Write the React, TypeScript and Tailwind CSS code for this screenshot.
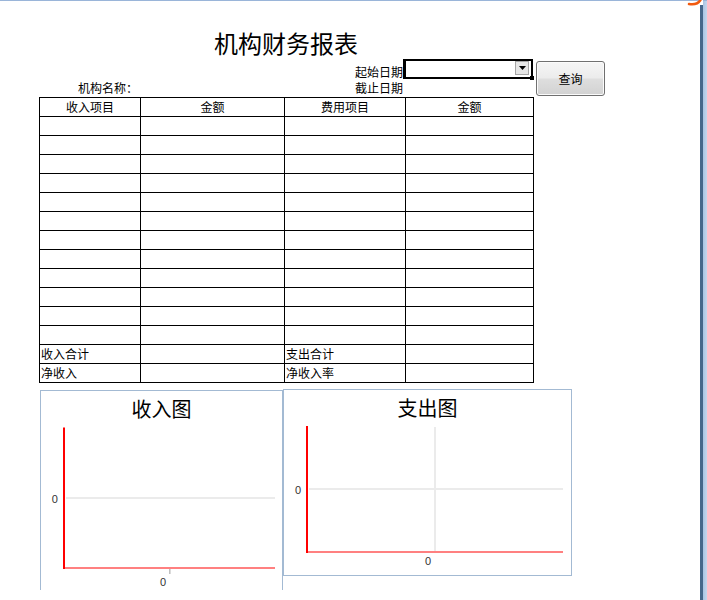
import React from 'react';

const cjk = { fontFamily: '"Noto Sans CJK SC", "Noto Sans", sans-serif' };

const headers = ['收入项目', '金额', '费用项目', '金额'];
const emptyRows = Array.from({ length: 12 });

const ReportTable: React.FC = () => (
  <div className="grid w-fit grid-cols-[100px_143px_120px_127px] auto-rows-[18px] gap-px bg-black p-px text-[12px] leading-[18px] text-black">
    {headers.map((h, i) => (
      <div key={`h${i}`} className="bg-white text-center">
        {h}
      </div>
    ))}
    {emptyRows.map((_, r) =>
      [0, 1, 2, 3].map((c) => <div key={`r${r}c${c}`} className="bg-white" />)
    )}
    <div className="bg-white pl-px">收入合计</div>
    <div className="bg-white" />
    <div className="bg-white pl-px">支出合计</div>
    <div className="bg-white" />
    <div className="bg-white pl-px">净收入</div>
    <div className="bg-white" />
    <div className="bg-white pl-px">净收入率</div>
    <div className="bg-white" />
  </div>
);

const IncomeChart: React.FC = () => (
  <div className="ml-px mt-px h-[200px] w-[243px] border-l border-r border-t border-[#a3bad3] bg-white">
    <div className="h-[30px] pt-[6px] text-center text-[20px] leading-[24px] text-black">收入图</div>
    <svg width="241" height="169" className="block">
      <line x1="25" y1="77" x2="234" y2="77" stroke="#ebebeb" strokeWidth="2" />
      <line x1="128.8" y1="148" x2="128.8" y2="153" stroke="#bdbdbd" strokeWidth="1.5" />
      <line x1="24" y1="147" x2="234" y2="147" stroke="#ff8080" strokeWidth="2" />
      <line x1="23" y1="6.5" x2="23" y2="148" stroke="#ff0000" strokeWidth="2" />
      <text x="13.7" y="82" fontSize="11" textAnchor="middle" fill="#333" fontFamily="Liberation Sans, sans-serif">
        0
      </text>
      <text x="122" y="165" fontSize="11" textAnchor="middle" fill="#333" fontFamily="Liberation Sans, sans-serif">
        0
      </text>
    </svg>
  </div>
);

const ExpenseChart: React.FC = () => (
  <div className="h-[187px] w-[289px] border border-[#a3bad3] bg-white">
    <div className="h-[30px] pt-[6px] text-center text-[20px] leading-[24px] text-black">支出图</div>
    <svg width="287" height="155" className="block">
      <line x1="25" y1="69" x2="279" y2="69" stroke="#ebebeb" strokeWidth="2" />
      <line x1="151" y1="7" x2="151" y2="131" stroke="#ebebeb" strokeWidth="2" />
      <line x1="23" y1="132" x2="279" y2="132" stroke="#ff8080" strokeWidth="2" />
      <line x1="23" y1="6" x2="23" y2="133" stroke="#ff0000" strokeWidth="2" />
      <text x="14" y="74" fontSize="11" textAnchor="middle" fill="#333" fontFamily="Liberation Sans, sans-serif">
        0
      </text>
      <text x="144" y="145" fontSize="11" textAnchor="middle" fill="#333" fontFamily="Liberation Sans, sans-serif">
        0
      </text>
    </svg>
  </div>
);

export default function App() {
  return (
    <div className="relative flex h-[600px] w-[707px] overflow-hidden bg-white" style={cjk}>
      <div className="flex-1 border-t border-[#9ab5d9] pl-[39px]">
        <div className="mt-[28px] w-[494px] text-center text-[24px] leading-[28px] text-black">机构财务报表</div>

        <div className="flex h-[40px] items-start text-[12px] leading-[16px] text-black">
          <div className="flex h-[40px] w-[364px] flex-col justify-end pb-px">
            <div className="text-right">起始日期</div>
            <div className="flex justify-between">
              <span className="pl-[39px]">机构名称：</span>
              <span>截止日期</span>
            </div>
          </div>
          <div className="relative mt-[2px] flex h-[20px] w-[130px] justify-end border-2 border-l-[3px] border-black bg-white pr-[2px]">
            <div className="flex h-[14px] w-[14px] items-center justify-center border border-[#a5a5a5] bg-[#e6e6e6]">
              <svg width="7" height="4" viewBox="0 0 7 4">
                <path d="M0 0h7L3.5 4z" fill="#000" />
              </svg>
            </div>
            <div className="absolute -bottom-[3px] -right-[3px] h-[4px] w-[4px] bg-black" />
          </div>
          <button className="ml-[3px] mt-[4px] h-[35px] w-[69px] rounded-[3px] border border-[#707070] bg-[linear-gradient(to_bottom,#f5f5f5_0%,#ececec_48%,#dedede_52%,#d2d2d2_100%)] text-[12px] text-black shadow-[inset_0_0_0_1px_#fbfbfb]">
            查询
          </button>
        </div>

        <ReportTable />

        <div className="mt-[6px] flex items-start">
          <IncomeChart />
          <ExpenseChart />
        </div>
      </div>

      <div className="mt-[5px] w-[3px] bg-[#46678b]" />
      <div className="w-[4px] border-t border-[#9ab5d9] bg-[linear-gradient(to_right,#a9c3e2,#c4d7ee)]" />

      <svg className="absolute right-0 top-0" width="22" height="8" viewBox="0 0 22 8">
        <path d="M4 4 Q12 5.5 15.5 0" stroke="#f25a0f" strokeWidth="2.5" fill="none" strokeLinecap="round" />
      </svg>
    </div>
  );
}
